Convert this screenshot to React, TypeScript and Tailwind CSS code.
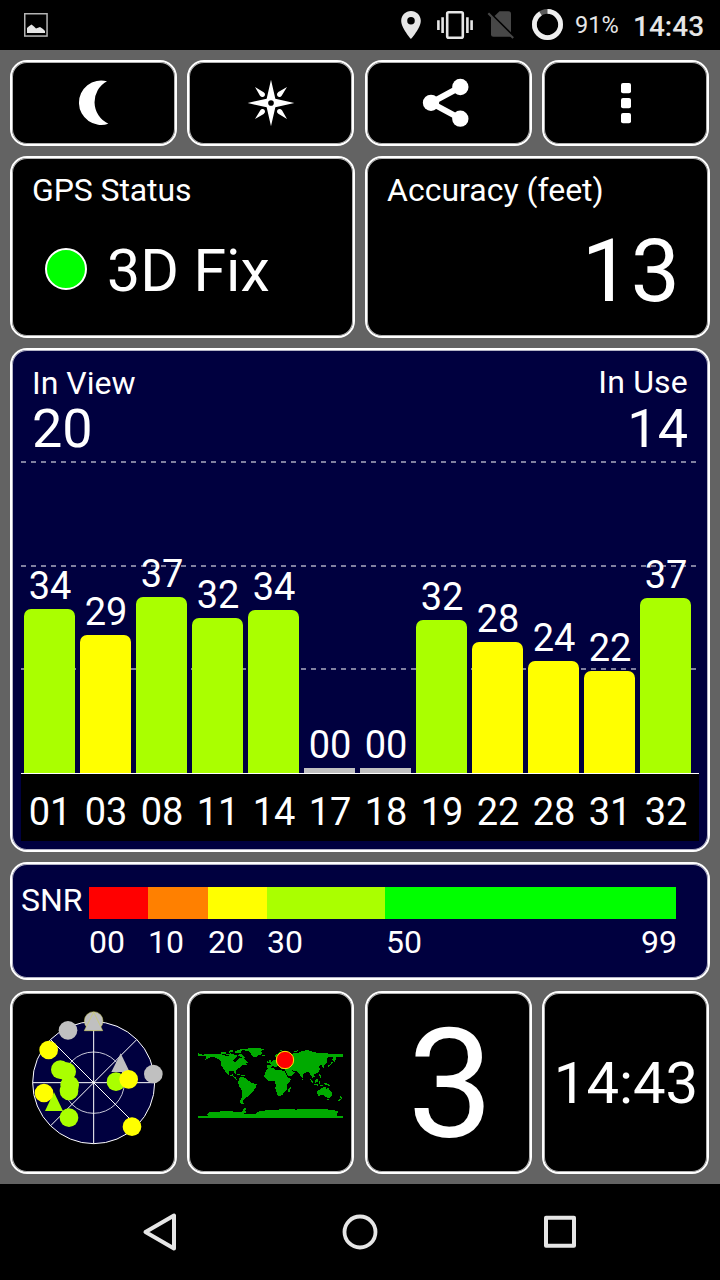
import React from "react";

const panel =
  "rounded-[17px] border-2 border-white shadow-[inset_0_0_0_1px_rgba(255,255,255,0.7)]";

type Satellite = { id: string; snr: string; height: number; color: string };

const LIME = "bg-[#aaff00]";
const YELLOW = "bg-[#ffff00]";
const GRAY = "bg-[#c0c0c0]";

const satellites: Satellite[] = [
  { id: "01", snr: "34", height: 164, color: LIME },
  { id: "03", snr: "29", height: 138, color: YELLOW },
  { id: "08", snr: "37", height: 176, color: LIME },
  { id: "11", snr: "32", height: 155, color: LIME },
  { id: "14", snr: "34", height: 163, color: LIME },
  { id: "17", snr: "00", height: 5, color: GRAY },
  { id: "18", snr: "00", height: 5, color: GRAY },
  { id: "19", snr: "32", height: 153, color: LIME },
  { id: "22", snr: "28", height: 131, color: YELLOW },
  { id: "28", snr: "24", height: 112, color: YELLOW },
  { id: "31", snr: "22", height: 102, color: YELLOW },
  { id: "32", snr: "37", height: 175, color: LIME },
];

function StatusBar() {
  return (
    <header className="flex h-[50px] items-center bg-black pl-6">
      <svg width="24" height="24" viewBox="0 0 24 24">
        <rect x="0.75" y="0.75" width="22.3" height="22.3" fill="none" stroke="#b4b4b4" strokeWidth="1.5" />
        <path d="M3 20V15L5 13.2L7.5 11.5L10 13.5L12 15.5L16 14L19 16L21 18V20Z" fill="#e6e6e6" />
      </svg>
      <svg className="ml-[353px]" width="20" height="28" viewBox="5 2 14 20">
        <path
          fill="#e6e6e6"
          d="M12 2C8.13 2 5 5.13 5 9c0 5.25 7 13 7 13s7-7.75 7-13c0-3.87-3.13-7-7-7zm0 9.7a2.7 2.7 0 1 1 0-5.4 2.7 2.7 0 0 1 0 5.4z"
        />
      </svg>
      <svg className="ml-4" width="36" height="28" viewBox="0 0 36 28">
        <rect x="10.2" y="1.3" width="15.6" height="25.4" rx="1.5" fill="none" stroke="#e6e6e6" strokeWidth="2.6" />
        <path d="M1.4 9.3V19M5.6 6.3V22M30.4 6.3V22M34.6 9.3V19" stroke="#e6e6e6" strokeWidth="2.6" />
      </svg>
      <svg className="ml-[14px]" width="28" height="28" viewBox="0 0 28 28">
        <path d="M12.5 0.3H21.5A2.5 2.5 0 0 1 24 2.8V21.2L7.6 4.9Z" fill="#474747" />
        <path d="M4 5L24 25L23.5 25.8H6.5A2.5 2.5 0 0 1 4 23.3Z" fill="#474747" />
        <path d="M1.3 2.2L26.2 27.1" stroke="#474747" strokeWidth="2.1" />
      </svg>
      <svg className="ml-4" width="32" height="32" viewBox="0 0 32 32">
        <circle cx="16.5" cy="15.5" r="13.1" fill="none" stroke="#5a5a5a" strokeWidth="4.8" />
        <circle
          cx="16.5"
          cy="15.5"
          r="13.1"
          fill="none"
          stroke="#efefef"
          strokeWidth="4.8"
          pathLength="100"
          strokeDasharray="91 9"
          transform="rotate(-90 16.5 15.5)"
        />
      </svg>
      <span className="ml-3 w-[43px] pt-[2px] text-[23.5px] leading-none text-[#e6e6e6]">91%</span>
      <span className="ml-[15px] pt-[3px] text-[28px] leading-none font-medium text-[#e6e6e6]">14:43</span>
    </header>
  );
}

function ToolButton({ viewBox, children }: { viewBox: string; children: React.ReactNode }) {
  return (
    <button className={`${panel} flex h-[86px] w-[167px] items-center justify-center bg-black`}>
      <svg width="60" height="60" viewBox={viewBox} fill="#fff">
        {children}
      </svg>
    </button>
  );
}

function Toolbar() {
  return (
    <div className="flex gap-[11px]">
      <div className="flex gap-[10px]">
        <ToolButton viewBox="189 219 180 180">
          <path d="M318 244A66.5 66.5 0 1 0 322 371A71 71 0 0 1 318 244Z" />
        </ToolButton>
        <ToolButton viewBox="723 219 180 180">
          <path
            fillRule="evenodd"
            d="M813 239L826 296L883 309L826 322L813 379L800 322L743 309L800 296ZM813 300.500A8.500 8.500 0 1 0 813 317.500A8.500 8.500 0 1 0 813 300.500Z"
          />
          {[0, 90, 180, 270].map((angle) => (
            <path
              key={angle}
              transform={`rotate(${angle} 813 309)`}
              d="M765 261L791 277Q796 280 795 285Q794 290 789 291Q784 292 780 287Z"
            />
          ))}
        </ToolButton>
      </div>
      <div className="flex gap-[10px]">
        <ToolButton viewBox="177 219 180 180">
          <circle cx="213" cy="308.500" r="24.500" />
          <circle cx="301" cy="261" r="24.500" />
          <circle cx="301" cy="356" r="24.500" />
          <path d="M301 261L213 308.500L301 356" fill="none" stroke="#fff" strokeWidth="18" />
        </ToolButton>
        <ToolButton viewBox="708 219 180 180">
          <rect x="783" y="249" width="30" height="31" rx="6" />
          <rect x="783" y="294" width="30" height="31" rx="6" />
          <rect x="783" y="339" width="30" height="31" rx="6" />
        </ToolButton>
      </div>
    </div>
  );
}

function Readouts() {
  return (
    <div className="flex gap-[10px]">
      <section className={`${panel} h-[182px] w-[345px] bg-black pt-4 pl-5`}>
        <h2 className="text-[32px] leading-none tracking-[-0.1px]">GPS Status</h2>
        <div className="mt-[35px] flex items-center pl-[13px]">
          <span className="mb-1 size-[42px] rounded-full border-2 border-white bg-[#00ff00]" />
          <span className="ml-5 text-[59px] leading-none">3D Fix</span>
        </div>
      </section>
      <section className={`${panel} h-[182px] w-[345px] bg-black pt-4 pr-[28px] pl-5`}>
        <h2 className="text-[32px] leading-none">Accuracy (feet)</h2>
        <p className="mt-[22px] text-right text-[87.5px] leading-none">13</p>
      </section>
    </div>
  );
}

function GridLine() {
  return (
    <div className="h-[2px] w-[675px] bg-[repeating-linear-gradient(90deg,#80809f_0_5px,transparent_5px_10px)]" />
  );
}

function SignalChart() {
  return (
    <section className={`${panel} flex h-[504px] flex-col bg-[#00003f] pr-[9px] pl-[9px]`}>
      <div className="flex h-[111px] justify-between pr-[11px] pl-[11px]">
        <div className="pt-[17px]">
          <div className="text-[32px] leading-none">In View</div>
          <div className="mt-[3px] text-[54px] leading-none">20</div>
        </div>
        <div className="pt-4 text-right">
          <div className="text-[32px] leading-none tracking-[0.2px]">In Use</div>
          <div className="mt-[4px] text-[54px] leading-none">14</div>
        </div>
      </div>
      <div className="relative h-[312px]">
        <div className="absolute inset-0 flex h-[209px] flex-col justify-between">
          <GridLine />
          <GridLine />
          <GridLine />
        </div>
        <div className="relative flex h-full items-end gap-[5px] pl-[3px]">
          {satellites.map((s) => (
            <div key={s.id} className="flex w-[51px] shrink-0 flex-col items-center">
              <span className="mb-1 pl-px text-[38px] leading-none">{s.snr}</span>
              <div
                className={`w-full ${s.snr === "00" ? "" : "rounded-t-[7px]"} ${s.color}`}
                style={{ height: s.height }}
              />
            </div>
          ))}
        </div>
      </div>
      <div className="flex h-[68px] gap-[5px] border-t border-white bg-black pt-[19px] pl-[3px]">
        {satellites.map((s) => (
          <span key={s.id} className="w-[51px] shrink-0 pl-px text-center text-[38px] leading-none">
            {s.id}
          </span>
        ))}
      </div>
    </section>
  );
}

function SnrLegend() {
  return (
    <section className={`${panel} flex h-[118px] bg-[#00003f] pl-[9px]`}>
      <span className="w-[68px] pt-5 text-[32px] leading-none">SNR</span>
      <div className="w-[588px] pt-[23px]">
        <div className="flex h-8">
          <div className="w-[59px] bg-[#ff0000]" />
          <div className="w-[60px] bg-[#ff8000]" />
          <div className="w-[59px] bg-[#ffff00]" />
          <div className="w-[118px] bg-[#aaff00]" />
          <div className="w-[291px] bg-[#00ff00]" />
        </div>
        <div className="mt-[7px] flex text-[32px] leading-none">
          <span className="w-[59px]">00</span>
          <span className="w-[60px]">10</span>
          <span className="w-[59px]">20</span>
          <span className="w-[119px]">30</span>
          <span>50</span>
          <span className="ml-auto">99</span>
        </div>
      </div>
    </section>
  );
}

function Dot({ x, y, c }: { x: number; y: number; c: string }) {
  return <circle cx={x} cy={y} r="28" fill={c} />;
}

function SkyPlot() {
  return (
    <svg width="145" height="145" viewBox="63 90 435 435">
      <circle cx="281" cy="308" r="183" fill="#00003f" stroke="#fff" strokeWidth="3" />
      <circle cx="281" cy="308" r="92" fill="none" stroke="#c8c8d8" strokeWidth="3" />
      <path d="M281 125V491M98 308H464M151.600 178.600L410.400 437.400M410.400 178.600L151.600 437.400" stroke="#fff" strokeWidth="3" />
      <circle cx="281" cy="123" r="28" fill="#c0c0c0" stroke="#cfcf60" strokeWidth="1.5" />
      <path d="M281 96L308 152H253Z" fill="#c0c0c0" stroke="#cfcf60" strokeWidth="2" />
      <Dot x={204} y={151} c="#c0c0c0" />
      <Dot x={460} y={282} c="#c0c0c0" />
      <Dot x={146} y={210} c="#ffff00" />
      <Dot x={181} y={269} c="#aaff00" />
      <Dot x={200} y={275} c="#aaff00" />
      <Dot x={209} y={315} c="#aaff00" />
      <Dot x={207} y={333} c="#aaff00" />
      <Dot x={207} y={413} c="#aaff00" />
      <path d="M162 337L189 393H135Z" fill="#aaff00" />
      <Dot x={132} y={339} c="#ffff00" />
      <Dot x={348} y={305} c="#aaff00" />
      <path d="M362 220L389 276H334Z" fill="#c0c0c0" />
      <Dot x={386} y={298} c="#ffff00" />
      <Dot x={396} y={440} c="#ffff00" />
    </svg>
  );
}

function WorldMap() {
  return (
    <svg width="145" height="73" viewBox="54 48 435 219">
      <g fill="#00aa00" shapeRendering="crispEdges">
        <path d="M54 69L64 73L72 76L72 71L100 71L126 73L140 78L152 76L162 73L170 80L164 86L158 92L166 98L172 92L180 84L188 82L196 90L206 97L196 99L201 104L188 104L182 112L174 116L168 122L166 132L161 124L148 124L145 132L151 136L160 132L159 139L166 141L170 148L178 150L168 149L158 139L144 134L136 124L130 116L124 106L124 96L116 88L108 83L96 80L84 85L74 90L82 83L72 82L80 78L54 77Z" />
        <path d="M124 67L134 65L140 69L134 73L124 71ZM138 73L152 70L162 74L150 78ZM146 62L160 60L160 65L148 68ZM164 66L172 60L190 56L200 57L186 62L180 70L168 70ZM172 74L184 73L192 78L196 84L188 82L178 79ZM162 76H170V82H162Z" />
        <path d="M192 57L218 54L242 55L252 58L244 62L246 73L236 75L226 82L220 82L214 73L206 64L194 61Z" />
        <path d="M246 74H256V79H248ZM166 130L180 133L178 136L168 133ZM184 134L195 135L192 138H184Z" />
        <path d="M178 146L184 140L196 144L206 152L214 158L231 163L226 174L220 184L212 190L204 199L196 205L190 212L188 216L191 221H182L180 212L186 200L186 182L178 170L174 158Z" />
        <path d="M260 114L263 104L272 104L270 98L278 94L282 88L288 92L288 82L284 77L296 68L308 64L318 66L336 72L344 68L352 70L362 65L378 61L392 62L402 67L430 69L450 71L488 71V80L470 80L468 85L462 92L456 88L460 82H446L440 88L442 98L434 102L431 113L426 112V104L416 109L420 118L416 126L406 131L401 132L404 140L398 144L394 138L390 131L384 125L378 128L370 132L367 146L360 134L354 126L342 122L334 120L345 128L336 136L326 140L318 126L315 118L302 117L300 110L292 108L286 112L278 108L271 113Z" />
        <path d="M266 91L272 90V97L265 100ZM261 94H265V98H261ZM442 108L450 104L454 95L459 98L454 104L446 112ZM462 84L468 88L464 96L460 94ZM300 62L306 58L304 63ZM338 66L348 62L356 61L346 67ZM374 60H386V63H374Z" />
        <path d="M264 115L280 113L286 119L300 121L313 122L318 134L325 145L335 146L326 158L320 166L320 178L312 188L306 196L294 198L290 188L286 174L288 164L283 153L264 152L252 140L256 126Z" />
        <path d="M324 178L331 170L333 175L328 186H323ZM367 146H370V151H367Z" />
        <path d="M388 144L396 150L402 161L396 158ZM402 161L416 164L414 167L402 164ZM404 152L414 145L414 156L406 158ZM416 153L422 152L420 162L416 160ZM417 132L421 131L424 146L420 143ZM430 158L440 159L452 167L446 167L434 164ZM420 165H428V168H420Z" />
        <path d="M411 184L420 178L430 172L438 171L438 177L444 171L448 178L456 188L455 197L447 205L438 202L430 194L414 198ZM442 207H448V211H442Z" />
        <path d="M481 199L487 204L482 208ZM480 206L483 209L476 214L474 211Z" />
        <path d="M54 258L86 259L82 254L88 247L110 245L150 243L176 247L190 243L188 237L200 233L196 242L200 247L190 251L226 251L234 245L262 240L290 239L330 236L348 239L370 236L430 236L460 241L476 243L470 252L472 257L488 258V264H54Z" />
      </g>
      <circle cx="315" cy="90" r="26" fill="#ff0000" stroke="#ffe600" strokeWidth="3" />
    </svg>
  );
}

function BottomTiles() {
  const tile = `${panel} flex h-[183px] w-[167px] items-center justify-center overflow-hidden bg-black`;
  return (
    <div className="flex gap-[11px]">
      <div className="flex gap-[10px]">
        <div className={tile}>
          <SkyPlot />
        </div>
        <div className={tile}>
          <WorldMap />
        </div>
      </div>
      <div className="flex gap-[10px]">
        <div className={`${tile} pt-1 pl-1 text-[153px] leading-none`}>3</div>
        <div className={`${tile} pl-px text-[58px] leading-none`}>14:43</div>
      </div>
    </div>
  );
}

function NavBar() {
  return (
    <nav className="grid h-24 grid-cols-3 items-center justify-items-center bg-black px-[60px]">
      <svg width="40" height="40" viewBox="-20 -20 40 40" fill="none" stroke="#e6e6e6" strokeWidth="4" strokeLinejoin="round">
        <path d="M-14.500 0L14 -16.500V16.500Z" />
      </svg>
      <svg width="40" height="40" viewBox="-20 -20 40 40" fill="none" stroke="#e6e6e6" strokeWidth="3.8">
        <circle r="15.500" />
      </svg>
      <svg width="40" height="40" viewBox="-20 -20 40 40" fill="none" stroke="#e6e6e6" strokeWidth="4" strokeLinejoin="round">
        <rect x="-14" y="-14.300" width="28" height="28" />
      </svg>
    </nav>
  );
}

export default function App() {
  return (
    <div className="flex h-[1280px] w-[720px] flex-col overflow-hidden bg-[#636363] font-['Roboto',sans-serif] text-white">
      <StatusBar />
      <main className="flex flex-1 flex-col px-[10px] pt-[10px]">
        <Toolbar />
        <div className="mt-[10px]">
          <Readouts />
        </div>
        <div className="mt-[10px]">
          <SignalChart />
        </div>
        <div className="mt-[10px]">
          <SnrLegend />
        </div>
        <div className="mt-[11px]">
          <BottomTiles />
        </div>
      </main>
      <NavBar />
    </div>
  );
}
